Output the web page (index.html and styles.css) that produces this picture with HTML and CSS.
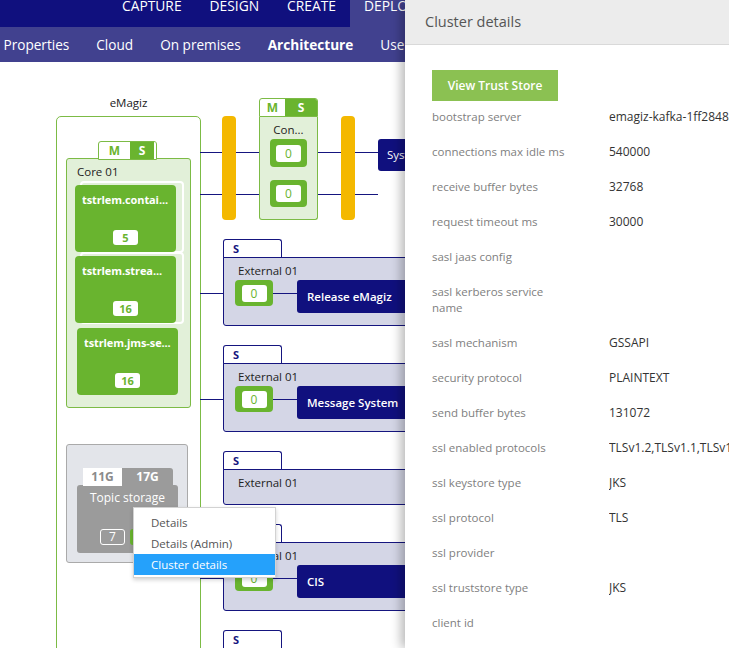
FILE: index.html
```html
<!DOCTYPE html>
<html lang="en">
<head>
<meta charset="utf-8">
<title>Architecture – Cluster details</title>
<link rel="stylesheet" href="styles.css">
</head>
<body>
<header class="topbar">
  <ul class="topnav">
    <li>CAPTURE</li>
    <li>DESIGN</li>
    <li>CREATE</li>
    <li class="active">DEPLOY</li>
  </ul>
</header>
<nav class="subbar">
  <ul class="subnav">
    <li>Properties</li>
    <li>Cloud</li>
    <li>On premises</li>
    <li class="active">Architecture</li>
    <li>Users</li>
  </ul>
</nav>

<main class="canvas">
  <div class="emagiz-label">eMagiz</div>
  <div class="emagiz"></div>

  <div class="wire wire-a"></div>
  <div class="wire wire-b"></div>

  <div class="ms-tab core-tab"><span class="m">M</span><span class="s">S</span></div>
  <section class="core">
    <div class="core-title">Core 01</div>
    <div class="cards">
      <div class="card stacked"><div class="card-title">tstrlem.contai...</div><span class="badge">5</span></div>
      <div class="card stacked"><div class="card-title">tstrlem.strea...</div><span class="badge">16</span></div>
      <div class="card shifted"><div class="card-title">tstrlem.jms-se...</div><span class="badge">16</span></div>
    </div>
  </section>

  <div class="bar bar-left"></div>
  <section class="con">
    <div class="ms-tab con-tab"><span class="m">M</span><span class="s">S</span></div>
    <div class="con-body">
      <div class="con-title">Con...</div>
      <div class="gate"><span>0</span></div>
      <div class="gate"><span>0</span></div>
    </div>
  </section>
  <div class="bar bar-right"></div>

  <div class="sys">System</div>

  <section class="topic">
    <div class="topic-tab"><span class="t-used">11G</span><span class="t-total">17G</span></div>
    <div class="topic-card">
      <div class="topic-title">Topic storage</div>
      <div class="topic-badges"><span class="outline">7</span><span class="filled">0</span></div>
    </div>
  </section>

  <div class="exts">
    <div class="ext">
      <div class="ext-tab">S</div>
      <div class="ext-box linked">
        <div class="ext-title">External 01</div>
        <div class="ext-row"><div class="gate"><span>0</span></div><i class="link"></i><div class="sysbox">Release eMagiz</div></div>
      </div>
    </div>
    <div class="ext">
      <div class="ext-tab">S</div>
      <div class="ext-box linked">
        <div class="ext-title">External 01</div>
        <div class="ext-row"><div class="gate"><span>0</span></div><i class="link"></i><div class="sysbox">Message System</div></div>
      </div>
    </div>
    <div class="ext">
      <div class="ext-tab">S</div>
      <div class="ext-box short">
        <div class="ext-title">External 01</div>
      </div>
    </div>
    <div class="ext">
      <div class="ext-tab">S</div>
      <div class="ext-box linked">
        <div class="ext-title">External 01</div>
        <div class="ext-row"><div class="gate"><span>0</span></div><i class="link"></i><div class="sysbox">CIS</div></div>
      </div>
    </div>
    <div class="ext">
      <div class="ext-tab">S</div>
      <div class="ext-box linked">
        <div class="ext-title">External 01</div>
      </div>
    </div>
  </div>
</main>

<ul class="ctx">
  <li>Details</li>
  <li>Details (Admin)</li>
  <li class="active">Cluster details</li>
</ul>

<aside class="drawer">
  <div class="drawer-head">Cluster details</div>
  <div class="drawer-body">
    <button class="btn" type="button">View Trust Store</button>
    <dl class="props">
      <div class="prop"><dt>bootstrap server</dt><dd>emagiz-kafka-1ff2848a.kafka.emagiz.com:9093</dd></div>
      <div class="prop"><dt>connections max idle ms</dt><dd>540000</dd></div>
      <div class="prop"><dt>receive buffer bytes</dt><dd>32768</dd></div>
      <div class="prop"><dt>request timeout ms</dt><dd>30000</dd></div>
      <div class="prop"><dt>sasl jaas config</dt><dd></dd></div>
      <div class="prop"><dt>sasl kerberos service name</dt><dd></dd></div>
      <div class="prop"><dt>sasl mechanism</dt><dd>GSSAPI</dd></div>
      <div class="prop"><dt>security protocol</dt><dd>PLAINTEXT</dd></div>
      <div class="prop"><dt>send buffer bytes</dt><dd>131072</dd></div>
      <div class="prop"><dt>ssl enabled protocols</dt><dd>TLSv1.2,TLSv1.1,TLSv1</dd></div>
      <div class="prop"><dt>ssl keystore type</dt><dd>JKS</dd></div>
      <div class="prop"><dt>ssl protocol</dt><dd>TLS</dd></div>
      <div class="prop"><dt>ssl provider</dt><dd></dd></div>
      <div class="prop"><dt>ssl truststore type</dt><dd>JKS</dd></div>
      <div class="prop"><dt>client id</dt><dd></dd></div>
    </dl>
  </div>
</aside>
</body>
</html>
```

FILE: styles.css
```css
* { box-sizing: border-box; }
html, body { margin: 0; padding: 0; }
body {
  width: 729px;
  height: 648px;
  overflow: hidden;
  position: relative;
  background: #fff;
  font-family: "Open Sans", "Noto Sans", sans-serif;
  color: #222;
}
ul { list-style: none; margin: 0; padding: 0; }

/* top navigation */
.topbar { height: 27px; background: #10107e; }
.topnav { display: flex; height: 27px; padding-left: 108px; }
.topnav li {
  height: 27px;
  padding: 0 14px;
  color: #fff;
  font-size: 13.8px;
  line-height: 11px;
}
.topnav li.active { background: #41418f; }

.subbar { height: 35px; background: #41418f; }
.subnav { display: flex; margin-left: -10px; }
.subnav li {
  padding: 0 13.5px;
  color: #fff;
  font-size: 13.6px;
  line-height: 35px;
  white-space: nowrap;
}
.subnav li.active { font-weight: 700; }

/* diagram canvas */
.canvas {
  position: relative;
  height: 586px;
  overflow: hidden;
  font-size: 11.5px;
}

.emagiz-label {
  position: absolute;
  left: 56px; top: 33px; width: 145px;
  text-align: center;
  line-height: 16px;
  color: #222;
}
.emagiz {
  position: absolute;
  left: 56px; top: 54px;
  width: 145px; height: 620px;
  border: 1px solid #7cbb45;
  border-radius: 5px;
}

.wire { position: absolute; left: 200px; width: 178px; height: 1px; background: #15157f; }
.wire-a { top: 90px; }
.wire-b { top: 132px; }

.ms-tab {
  display: flex;
  height: 19px;
  border: 1px solid #7cbb45;
  border-radius: 3px 3px 0 0;
  background: #fff;
  font-weight: 700;
  font-size: 12px;
  line-height: 17px;
  overflow: hidden;
}
.ms-tab .m { color: #6ab42f; text-align: center; }
.ms-tab .s { flex: 1; background: #6ab42f; color: #fff; text-align: center; }
.core-tab { position: absolute; left: 98px; top: 79px; width: 59px; z-index: 1; }
.core-tab .m { width: 31px; }
.core-tab .s { border-right: 2px solid #fff; }

.core {
  position: absolute;
  left: 66px; top: 96px;
  width: 125px; height: 250px;
  background: #e2f0d9;
  border: 1px solid #7cbb45;
  border-radius: 3px;
  padding: 5px 0 0 8px;
}
.core-title { line-height: 16px; padding-left: 2px; color: #222; }
.cards {
  position: relative;
  z-index: 0;
  display: flex;
  flex-direction: column;
  gap: 4px;
  margin-top: 5px;
}
.card {
  position: relative;
  width: 101px; height: 67px;
  background: #69b42f;
  border-radius: 4px;
  padding: 7px 7px 7px;
  display: flex;
  flex-direction: column;
  align-items: center;
}
.card.stacked::before {
  content: "";
  position: absolute;
  left: 5px; top: -4px;
  width: 100px; height: 68px;
  border: 2px solid #fff;
  border-radius: 4px;
  z-index: -1;
}
.card.shifted { margin-left: 2px; margin-top: 1px; }
.card-title {
  align-self: stretch;
  color: #fff;
  font-weight: 700;
  font-size: 11px;
  letter-spacing: -0.1px;
  line-height: 16px;
  white-space: nowrap;
  overflow: hidden;
}
.badge {
  margin-top: auto;
  min-width: 25px; height: 15px;
  background: #fff;
  color: #6ab42f;
  border-radius: 3px;
  font-weight: 700;
  font-size: 11px;
  line-height: 15px;
  text-align: center;
}

.bar {
  position: absolute;
  top: 54px;
  width: 14px; height: 104px;
  background: #f4b800;
  border-radius: 4px;
}
.bar-left { left: 222px; }
.bar-right { left: 341px; }

.con {
  position: absolute;
  left: 259px; top: 36px;
  width: 59px; height: 122px;
  display: flex;
  flex-direction: column;
}
.con-tab { flex: none; border-radius: 3px 3px 0 0; }
.con-tab .m { width: 25px; }
.con-body {
  flex: 1;
  background: #e2f0d9;
  border: 1px solid #7cbb45;
  border-top: 0;
  border-radius: 0 0 3px 3px;
  display: flex;
  flex-direction: column;
  align-items: center;
  padding-top: 5px;
}
.con-title { line-height: 16px; color: #222; margin-bottom: 1px; }
.con .gate { width: 37px; height: 28px; }
.con .gate + .gate { margin-top: 13px; height: 27px; }

.gate {
  width: 38px; height: 26px;
  background: #69b42f;
  border-radius: 4px;
  display: flex;
  align-items: center;
  justify-content: center;
  flex: none;
}
.gate span {
  width: 25px; height: 17px;
  background: #fff;
  border-radius: 3px;
  color: #6ab42f;
  font-size: 12px;
  line-height: 17px;
  text-align: center;
}

.sys {
  position: absolute;
  left: 378px; top: 77px;
  width: 120px; height: 32px;
  background: #10107e;
  border-radius: 3px;
  color: #fff;
  line-height: 32px;
  padding-left: 9px;
}

/* topic storage */
.topic {
  position: absolute;
  left: 66px; top: 382px;
  width: 122px; height: 119px;
  background: #e3e5ea;
  border: 1px solid #aaa;
  border-radius: 3px;
  padding: 23px 0 0 10px;
}
.topic-tab {
  display: flex;
  margin-left: 6px;
  width: 90px; height: 18px;
  font-weight: 700;
  font-size: 12px;
  line-height: 18px;
}
.t-used { width: 39px; background: #fff; color: #8a8a8a; text-align: center; }
.t-total { flex: 1; background: #9b9b9b; color: #fff; text-align: center; border-radius: 0 3px 0 0; }
.topic-card {
  width: 101px; height: 68px;
  background: #9b9b9b;
  border-radius: 3px;
  margin-top: -1px;
  display: flex;
  flex-direction: column;
  align-items: center;
  padding: 5px 0 8px;
}
.topic-title { color: #fff; line-height: 16px; font-size: 12px; }
.topic-badges { margin-top: auto; display: flex; gap: 5px; }
.topic-badges span {
  width: 25px; height: 16px;
  border-radius: 3px;
  font-size: 12px;
  line-height: 14px;
  text-align: center;
}
.outline { border: 1px solid #fff; color: #fff; }
.filled { background: #69b42f; color: #69b42f; }

/* externals */
.exts {
  position: absolute;
  left: 223px; top: 177px;
  width: 330px;
  display: flex;
  flex-direction: column;
  gap: 19px;
}
.ext-tab {
  width: 59px; height: 19px;
  margin-bottom: -1px;
  background: #fff;
  border: 1px solid #15157f;
  border-bottom: 0;
  border-radius: 3px 3px 0 0;
  color: #15157f;
  font-weight: 700;
  font-size: 11px;
  line-height: 18px;
  padding-left: 9px;
}
.ext-box {
  position: relative;
  height: 69px;
  background: #d4d6e6;
  border: 1px solid #15157f;
  border-radius: 0 3px 3px 3px;
  padding: 5px 0 0 11px;
}
.ext-box.short { height: 36px; }
.ext-box.linked::before {
  content: "";
  position: absolute;
  left: -24px; top: 35px;
  width: 23px; height: 1px;
  background: #15157f;
}
.ext-title { line-height: 16px; color: #222; padding-left: 3px; margin-bottom: 1px; }
.ext-row { display: flex; align-items: flex-start; }
.link { display: block; width: 24px; height: 1px; margin-top: 13px; background: #15157f; }
.sysbox {
  height: 33px;
  width: 200px;
  background: #10107e;
  border-radius: 3px;
  color: #fff;
  font-weight: 600;
  line-height: 33px;
  padding-left: 10px;
  white-space: nowrap;
}

/* context menu */
.ctx {
  position: absolute;
  left: 133px; top: 507px;
  width: 143px;
  background: #fff;
  border: 1px solid #d2d2d2;
  box-shadow: 0 2px 4px rgba(0,0,0,.18);
  padding: 4px 0 2px;
  font-size: 11.5px;
  color: #555;
}
.ctx li { height: 21px; line-height: 21px; padding-left: 17px; }
.ctx li.active { background: #25a1fb; color: #fff; }

/* side drawer */
.drawer {
  position: absolute;
  top: 0; left: 405px;
  width: 324px; height: 648px;
  background: #fff;
  box-shadow: -4px 0 10px rgba(0,0,0,.28);
  overflow: hidden;
}
.drawer-head {
  height: 45px;
  background: #ececec;
  border-bottom: 1px solid #d9d9d9;
  padding-left: 20px;
  font-size: 14.5px;
  line-height: 44px;
  color: #555;
}
.drawer-body { padding: 25px 0 0 27px; }
.btn {
  display: block;
  width: 126px; height: 31px;
  background: #8bc152;
  color: #fff;
  border: 0;
  padding: 0;
  font-family: inherit;
  font-size: 12px;
  font-weight: 600;
  line-height: 31px;
  text-align: center;
}
.props { margin: -1px 0 0; }
.prop {
  display: grid;
  grid-template-columns: 138px 1fr;
  column-gap: 39px;
  padding: 9px 0 10px;
  font-size: 11.5px;
  line-height: 16px;
}
.prop dt { color: #808080; }
.prop dd { margin: 0; color: #333; font-size: 12px; white-space: nowrap; overflow: hidden; }
```
